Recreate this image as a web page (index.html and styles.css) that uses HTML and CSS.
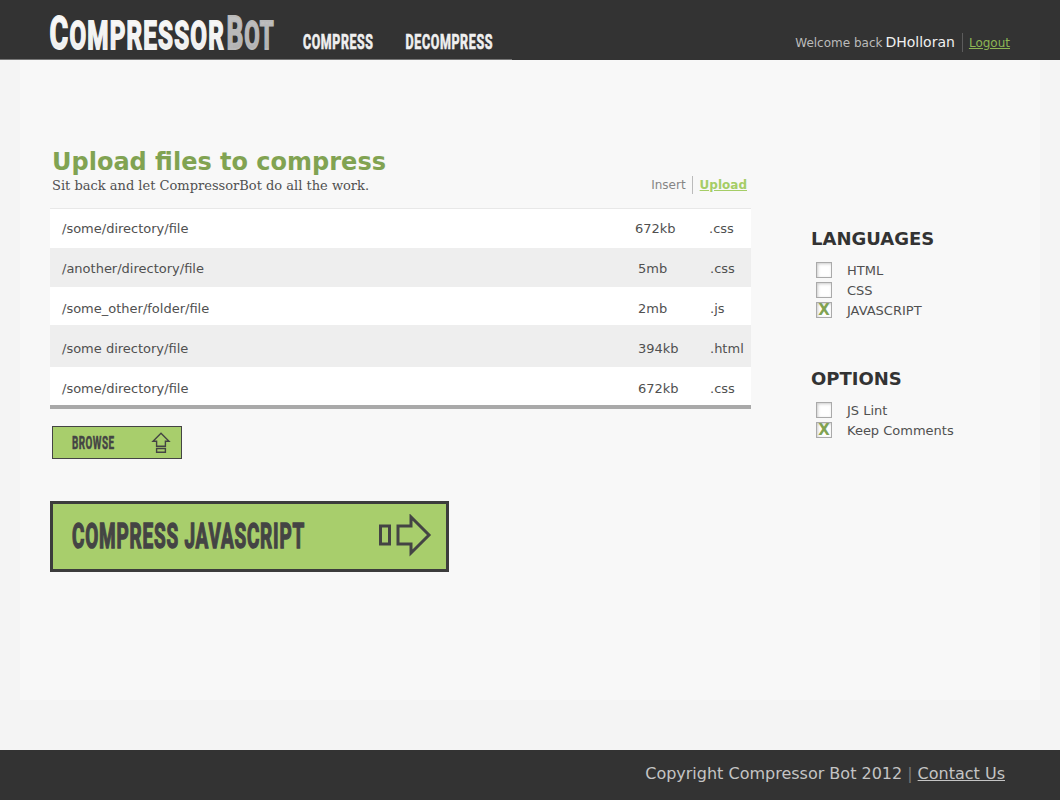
FILE: index.html
```html
<!DOCTYPE html>
<html lang="en">
<head>
<meta charset="utf-8">
<title>CompressorBot</title>
<link rel="stylesheet" href="styles.css">
</head>
<body>
<header class="header">
  <a class="logo"><svg width="230" height="45" viewBox="0 0 230 45" class="display">
    <defs>
      <linearGradient id="white" x1="0" y1="0" x2="0" y2="1"><stop offset="0" stop-color="#fff"/><stop offset="1" stop-color="#e9e9e9"/></linearGradient>
      <linearGradient id="grey" x1="0" y1="0" x2="0" y2="1"><stop offset="0" stop-color="#c6c6c6"/><stop offset="1" stop-color="#adadad"/></linearGradient>
    </defs>
    <text x="4.5" y="43.5" font-size="46" letter-spacing="2" textLength="175.5" lengthAdjust="spacingAndGlyphs" fill="url(#white)" stroke="#f4f4f4" stroke-width="1.8">C<tspan font-size="39">OMPRESSOR</tspan></text>
    <text x="181.5" y="43.5" font-size="46" letter-spacing="1.5" textLength="48" lengthAdjust="spacingAndGlyphs" fill="url(#grey)" stroke="#b9b9b9" stroke-width="1.8">B<tspan font-size="39">OT</tspan></text>
  </svg></a>
  <nav class="nav">
    <a><svg width="72" height="20" class="display light"><text x="1" y="16" font-size="20" letter-spacing="1" textLength="70.5" lengthAdjust="spacingAndGlyphs">COMPRESS</text></svg></a>
    <a><svg width="90" height="20" class="display light"><text x="1.5" y="16" font-size="20" letter-spacing="1" textLength="87.5" lengthAdjust="spacingAndGlyphs">DECOMPRESS</text></svg></a>
  </nav>
  <div class="account"><span class="welcome">Welcome back</span><span class="user">DHolloran</span><a class="logout">Logout</a></div>
</header>
<main class="page">
  <section class="files">
    <div class="heading">
      <div><h1>Upload files to compress</h1><p>Sit back and let CompressorBot do all the work.</p></div>
      <div class="modes"><span class="insert">Insert</span><a class="upload">Upload</a></div>
    </div>
    <div class="list">
      <div class="row r1"><span>/some/directory/file</span><span>672kb</span><span>.css</span></div>
      <div class="row r2"><span>/another/directory/file</span><span>5mb</span><span>.css</span></div>
      <div class="row r3"><span>/some_other/folder/file</span><span>2mb</span><span>.js</span></div>
      <div class="row r4"><span>/some directory/file</span><span>394kb</span><span>.html</span></div>
      <div class="row r5"><span>/some/directory/file</span><span>672kb</span><span>.css</span></div>
    </div>
    <button class="browse">
      <svg width="44" height="18" class="display dark"><text x="1" y="15" font-size="18" letter-spacing=".8" textLength="42.5" lengthAdjust="spacingAndGlyphs">BROWSE</text></svg>
      <svg width="20" height="22" viewBox="0 0 20 22" fill="none" stroke="#444" stroke-width="1.4"><path d="M10 1.3 18 9.3H14.4V14.3H5.6V9.3H2Z"/><path d="M5.6 16.5h8.8v3.7H5.6z"/></svg>
    </button>
    <button class="compress">
      <svg width="236" height="34" class="display dark big"><text x="1" y="27.7" font-size="35.5" letter-spacing="1.5" textLength="233" lengthAdjust="spacingAndGlyphs">COMPRESS JAVASCRIPT</text></svg>
      <svg width="54" height="46" viewBox="0 0 54 46" fill="none" stroke="#444" stroke-width="3"><path d="M2.5 12h9v18h-9z"/><path d="M20 12H33V3L51 21 33 39V30H20Z"/></svg>
    </button>
  </section>
  <aside class="side">
    <h2>LANGUAGES</h2>
    <label><i class="box"></i>HTML</label>
    <label><i class="box"></i>CSS</label>
    <label><i class="box">X</i>JAVASCRIPT</label>
    <h2 class="second">OPTIONS</h2>
    <label><i class="box"></i>JS Lint</label>
    <label><i class="box">X</i>Keep Comments</label>
  </aside>
</main>
<footer class="footer"><span>Copyright Compressor Bot 2012</span><span class="pipe">|</span><a>Contact Us</a></footer>
</body>
</html>
```
FILE: styles.css
```css
* { box-sizing: border-box; }
body { margin: 0; width: 1060px; height: 800px; display: flex; flex-direction: column; background: #f4f4f4; font-family: "DejaVu Sans", sans-serif; color: #505050; }
h1, h2, p { margin: 0; }
svg { display: block; }
.display { font-family: Roboto, "Liberation Sans", sans-serif; font-weight: 700; overflow: visible; }
.light { fill: #f0f0f0; stroke: #f0f0f0; stroke-width: .7px; }
.dark { fill: #444; stroke: #444; stroke-width: .5px; }
.big { stroke-width: 1.5px; }
.header { height: 60px; flex: none; display: flex; background: linear-gradient(#777, #777) 0 59px / 512px 1px no-repeat #333; padding-left: 45px; }
.logo { padding-top: 5px; width: 257px; }
.nav { display: flex; gap: 30px; padding-top: 33px; }
.account { margin-left: auto; padding-right: 50px; padding-top: 33px; display: flex; align-items: baseline; line-height: 19px; white-space: nowrap; }
.welcome { font-size: 12px; color: #bbb; margin-right: 3px; }
.user { font-size: 14px; color: #f0f0f0; padding-right: 7px; border-right: 1px solid #5c5c5c; margin-right: 6px; }
.logout { font-size: 12px; color: #8db654; text-decoration: underline; }
.page { width: 1020px; height: 640px; margin: 0 20px; background: #f8f8f8; display: flex; }
.files { width: 731px; padding: 87px 0 0 30px; }
.heading { height: 61px; display: flex; justify-content: space-between; padding: 0 4px 0 2px; }
h1 { font-size: 24px; line-height: 30px; color: #81a352; }
p { font-family: "DejaVu Serif", serif; font-size: 13px; line-height: 16px; margin-top: 1px; }
.modes { display: flex; font-size: 12px; line-height: 18px; padding-top: 29px; }
.insert { color: #858585; padding-right: 6px; border-right: 1px solid #bbb; height: 18px; margin-right: 7px; }
.upload { color: #a5cd66; font-weight: 700; text-decoration: underline; }
.list { border-top: 1px solid #e8e8e8; border-bottom: 4px solid #a9a9a9; font-size: 13px; line-height: 20px; }
.row { display: grid; grid-template-columns: 576px 72px 1fr; padding-left: 12px; background: #fff; }
.r1 { height: 39px; padding-top: 10px; grid-template-columns: 573px 74px 1fr; }
.r2 { height: 39px; padding-top: 11px; background: #eee; }
.r3 { height: 38px; padding-top: 12px; }
.r4 { height: 42px; padding-top: 14px; background: #eee; }
.r5 { height: 38px; padding-top: 12px; }
button { display: flex; align-items: center; justify-content: space-between; background: #a8ce6c; border-radius: 0; }
.browse { width: 130px; height: 33px; margin: 17px 0 0 2px; border: 1.5px solid #444; padding: 0 10px 0 18px; }
.compress { width: 399px; height: 71px; margin-top: 42px; border: 3px solid #3c3c3c; padding: 0 14px 0 18px; }
.side { padding: 169px 0 0 60px; }
h2 { font-size: 18px; line-height: 20px; color: #333; margin-bottom: 11px; }
.second { margin-top: 49px; }
label { display: flex; align-items: center; height: 20px; font-size: 13px; padding-left: 5px; }
.box { width: 16px; height: 16px; flex: none; margin-right: 15px; border: 1px solid #aaa; background: #fff; box-shadow: inset 1px 1px 3px #ccc; color: #81a352; font: 700 15px/15px "DejaVu Sans", sans-serif; text-align: center; display: flex; justify-content: center; }
.footer { height: 50px; margin-top: auto; background: #333; color: #c4c4c4; font-size: 16px; line-height: 48px; padding-right: 55px; display: flex; justify-content: flex-end; }
.pipe { color: #777; margin: 0 5px; }
.footer a { text-decoration: underline; }
```
